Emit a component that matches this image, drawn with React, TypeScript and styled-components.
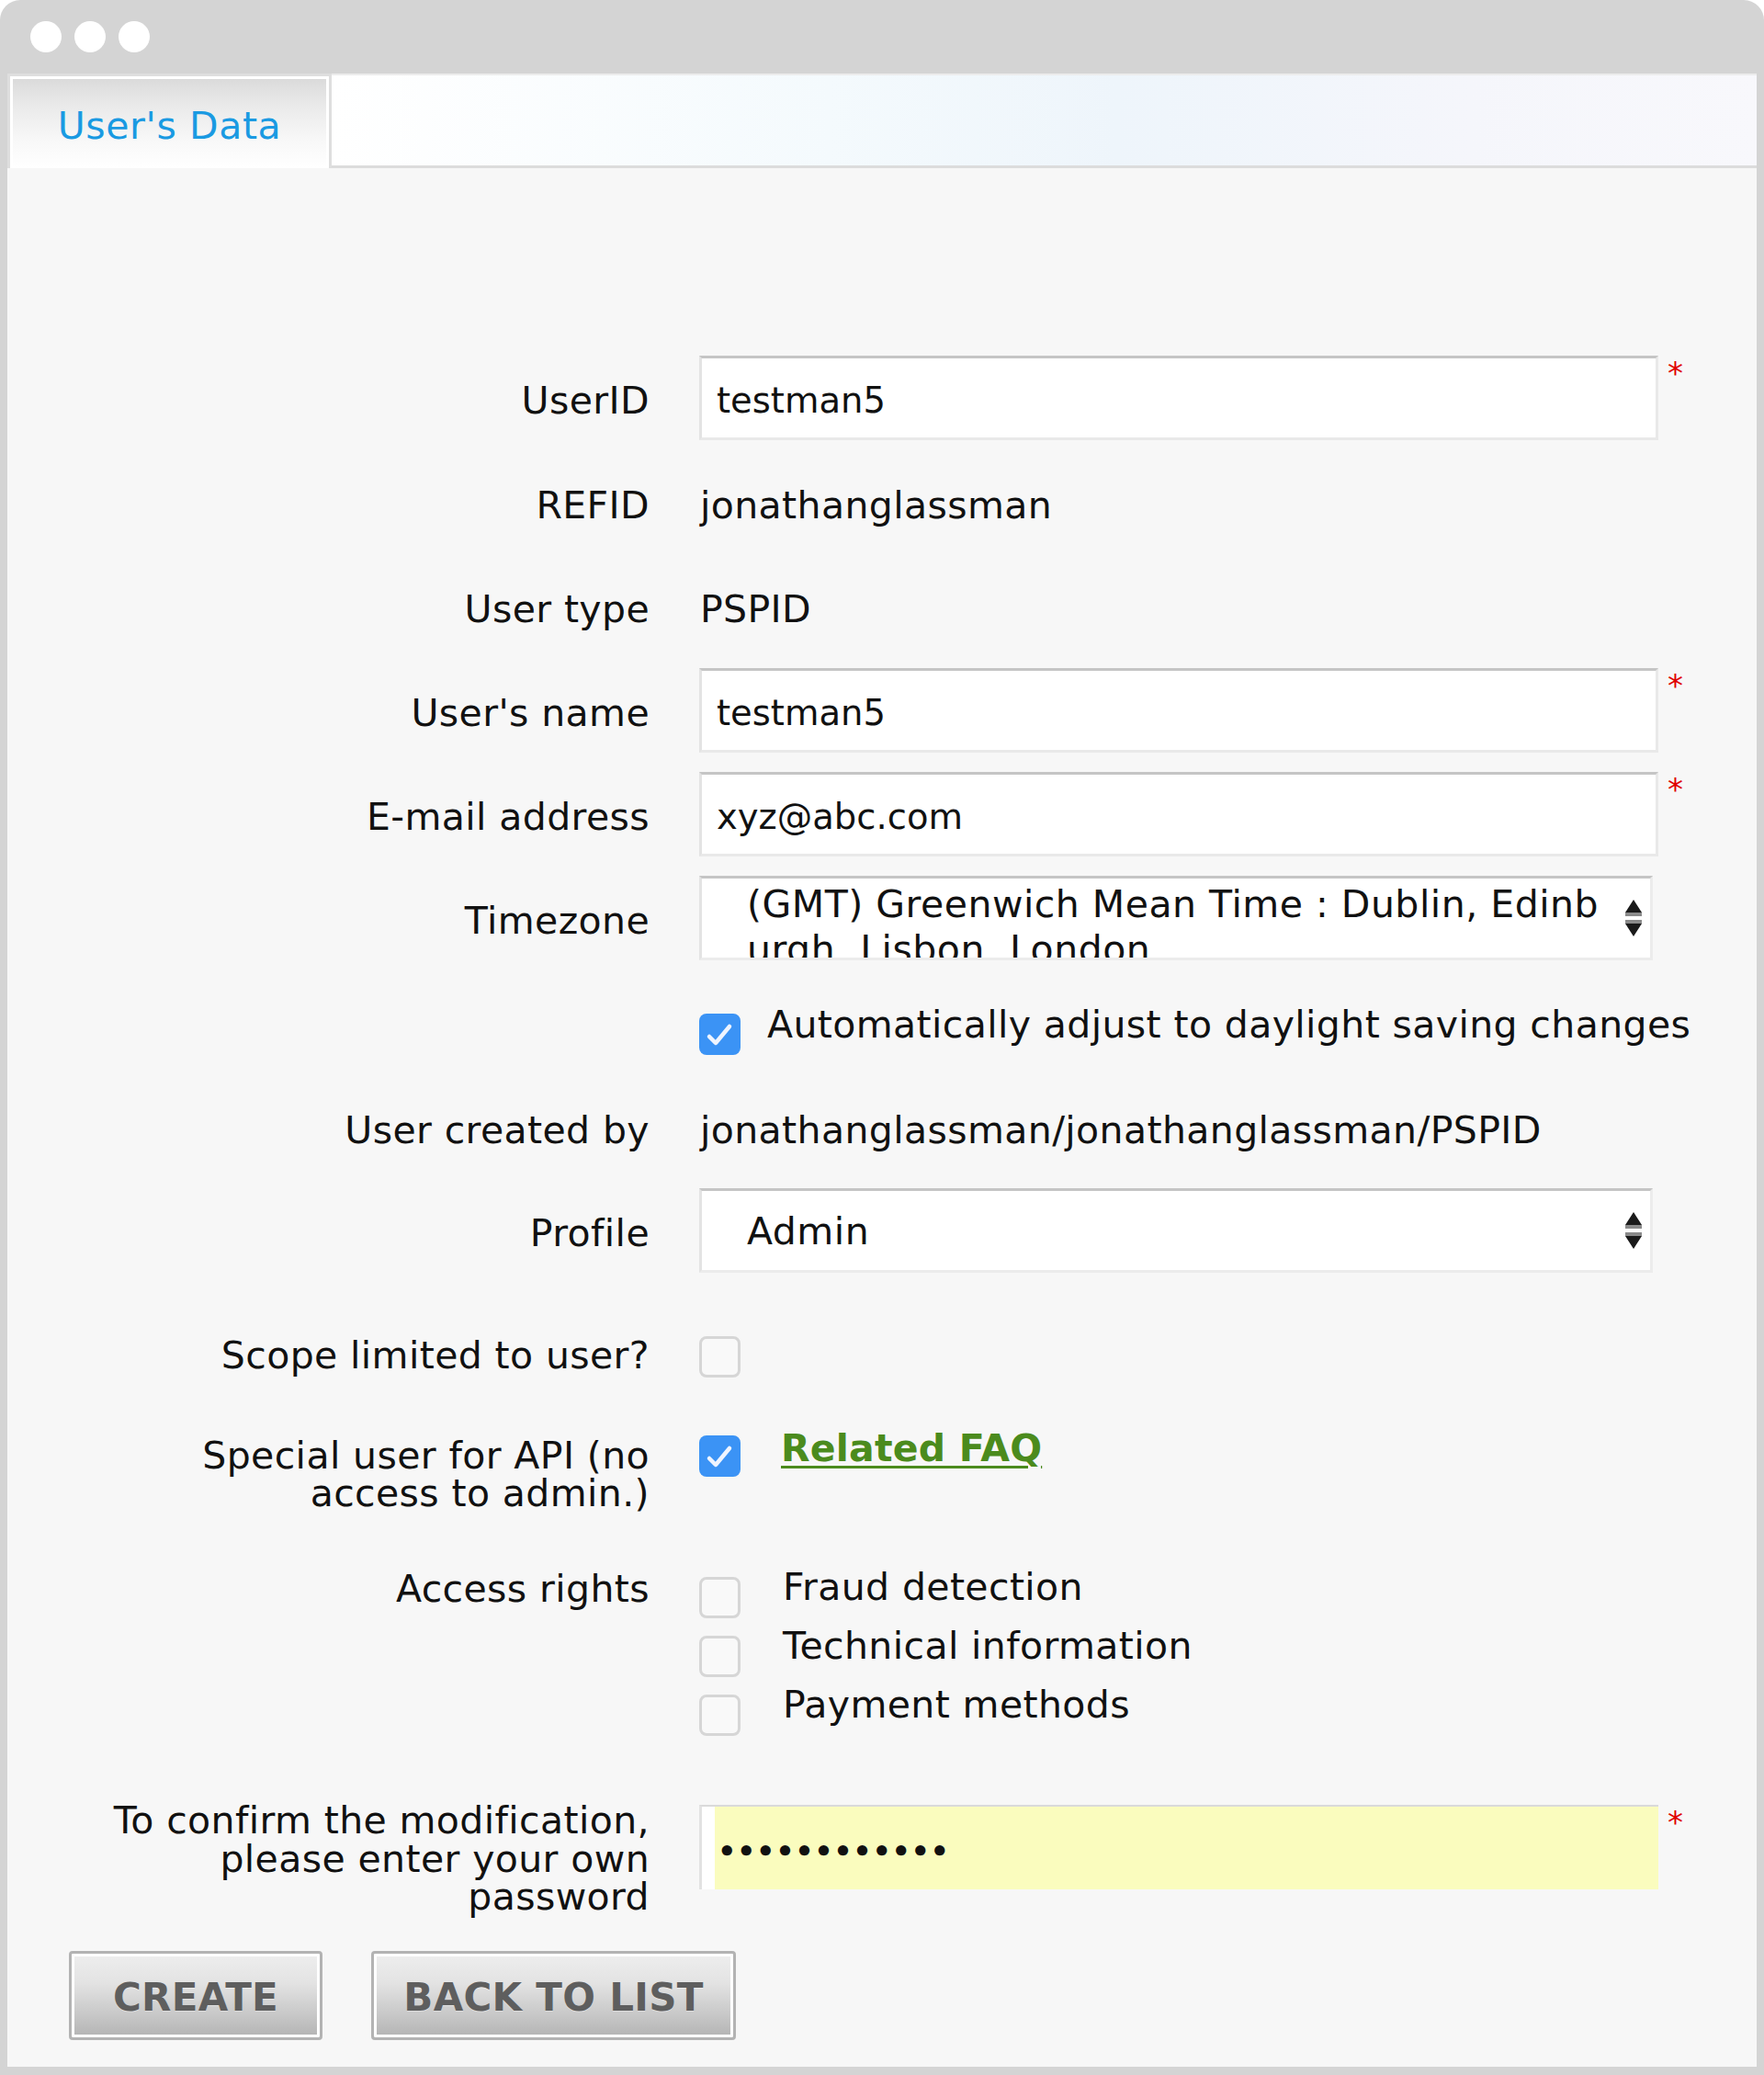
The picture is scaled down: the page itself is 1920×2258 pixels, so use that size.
import React from "react";
import styled, { createGlobalStyle } from "styled-components";

const GlobalStyle = createGlobalStyle`
  html, body { margin: 0; padding: 0; background: #ffffff; }
  body { font-family: "DejaVu Sans", Verdana, sans-serif; color: #111; letter-spacing: 0.38px; }
  *, *::before, *::after { box-sizing: border-box; }
`;

const Window = styled.div`
  width: 1920px;
  height: 2258px;
  background: #d4d4d4;
  border-radius: 22px 22px 0 0;
  display: flex;
  flex-direction: column;
  padding: 0 8px 9px;
`;

const TitleBar = styled.div`
  height: 80px;
  flex: none;
  display: flex;
  align-items: center;
  gap: 14px;
  padding-left: 25px;
`;

const Dot = styled.span`
  width: 34px;
  height: 34px;
  border-radius: 50%;
  background: #ffffff;
`;

const Panel = styled.div`
  flex: 1;
  background: #f7f7f7;
  display: flex;
  flex-direction: column;
`;

const TabStrip = styled.div`
  height: 103px;
  flex: none;
  display: flex;
`;

const Tab = styled.div`
  width: 353px;
  height: 103px;
  border: 3px solid #dedede;
  border-bottom: none;
  box-shadow: inset 0 3px 0 #ffffff, inset 3px 0 0 #ffffff, inset -3px 0 0 #ffffff;
  background: linear-gradient(#d9d9d9 0%, #e9e9e9 30%, #f8f8f8 70%, #ffffff 100%);
  display: flex;
  align-items: center;
  justify-content: center;
  padding-top: 7px;
  color: #1a9ae2;
  font-size: 41px;
  letter-spacing: 0.6px;
`;

const TabFill = styled.div`
  flex: 1;
  border-top: 2px solid #ececec;
  border-bottom: 3px solid #dcdcdc;
  background: linear-gradient(90deg, #ffffff 0%, #f4fafd 35%, #eef5fb 55%, #f5f6fb 80%, #f8f8fc 100%);
`;

const Form = styled.div`
  padding-top: 204px;
  display: flex;
  flex-direction: column;
`;

const Label = styled.div<{ $mt?: number; $lh?: number }>`
  padding-left: 60px;
  padding-right: 54px;
  padding-top: 3px;
  text-align: right;
  font-size: 41px;
  line-height: ${(p) => p.$lh ?? 41}px;
  color: #111;
  margin-top: ${(p) => p.$mt ?? 0}px;
`;

const Value = styled.span`
  font-size: 41px;
  line-height: 41px;
  padding-left: 1px;
  padding-top: 6px;
  white-space: nowrap;
  color: #111;
`;

const FormRow = styled.div<{ $mt: number; $h?: number; $align?: string }>`
  display: grid;
  grid-template-columns: 753px 1044px 1fr;
  align-items: ${(p) => p.$align ?? "center"};
  margin-top: ${(p) => p.$mt}px;
  min-height: ${(p) => p.$h ?? 0}px;

  & > ${Label} {
    padding-top: ${(p) => (p.$align ? 3 : 6)}px;
  }
`;

const Field = styled.div<{ $mt?: number }>`
  display: flex;
  align-items: flex-start;
  margin-top: ${(p) => p.$mt ?? 0}px;
  min-width: 0;
`;

const Required = styled.span<{ $mt: number }>`
  align-self: start;
  margin-top: ${(p) => p.$mt}px;
  padding-left: 10px;
  color: #e00000;
  font-size: 34px;
  line-height: 34px;
`;

const TextInput = styled.input`
  width: 1044px;
  height: 92px;
  border-style: solid;
  border-width: 3px;
  border-color: #c5c5c5 #e9e9e9 #e9e9e9 #e3e3e3;
  background: #ffffff;
  padding: 5px 16px 0;
  font-family: "DejaVu Sans", Verdana, sans-serif;
  font-size: 38.5px;
  letter-spacing: 0;
  color: #111;
  outline: none;
`;

const PasswordBox = styled.div`
  width: 1044px;
  height: 92px;
  border-left: 3px solid #e2e2e2;
  border-top: 2px solid #dadada;
  background: linear-gradient(90deg, #ffffff 14px, #fafcbe 14px);
  display: flex;
  align-items: center;
  padding-left: 17px;
  padding-top: 8px;
`;

const Bullets = styled.span`
  font-size: 32px;
  font-weight: bold;
  letter-spacing: 0.6px;
  color: #111;
`;

const SelectBox = styled.div`
  width: 1038px;
  height: 92px;
  overflow: hidden;
  border-style: solid;
  border-width: 3px;
  border-color: #c5c5c5 #ececec #ececec #e3e3e3;
  background: #ffffff;
  display: flex;
  align-items: center;
  padding: 0 9px 0 49px;
`;

const SelectText = styled.div<{ $multi?: boolean }>`
  flex: 1;
  align-self: ${(p) => (p.$multi ? "flex-start" : "center")};
  padding-top: ${(p) => (p.$multi ? 4 : 2)}px;
  font-size: 41px;
  line-height: 49px;
  letter-spacing: 0.5px;
  white-space: nowrap;
  color: #111;
`;

const BoxWrap = styled.span<{ $mt?: number }>`
  flex: none;
  display: block;
  width: 45px;
  height: 45px;
  margin-top: ${(p) => p.$mt ?? 0}px;
`;

const EmptyBox = styled.span<{ $mt?: number }>`
  flex: none;
  display: block;
  width: 45px;
  height: 45px;
  margin-top: ${(p) => p.$mt ?? 0}px;
  border: 3px solid #d6d6d6;
  border-radius: 8px;
  background: #f9f9f9;
`;

const CheckText = styled.span<{ $ml: number }>`
  margin-left: ${(p) => p.$ml}px;
  padding-top: 2px;
  font-size: 41px;
  line-height: 41px;
  white-space: nowrap;
  color: #111;
`;

const FaqLink = styled.a`
  margin-left: 44px;
  margin-top: -6px;
  font-size: 41px;
  line-height: 41px;
  font-weight: bold;
  letter-spacing: 0.2px;
  color: #4b8b1d;
  text-decoration: underline;
  text-decoration-thickness: 3px;
  text-underline-offset: 5px;
  white-space: nowrap;
`;

const OptionList = styled.div`
  display: flex;
  flex-direction: column;
  gap: 8px;
`;

const OptionRow = styled.div`
  display: flex;
  align-items: flex-start;
  height: 56px;
`;

const ButtonRow = styled.div`
  display: flex;
  gap: 53px;
  padding-left: 67px;
  margin-top: 37px;
`;

const Button = styled.button<{ $w: number }>`
  width: ${(p) => p.$w}px;
  height: 97px;
  border: 3px solid #b3b3b3;
  border-radius: 4px;
  box-shadow: inset 0 0 0 3px #ffffff;
  background: linear-gradient(#eeeeee 0%, #e3e3e3 35%, #cacaca 70%, #b3b3b3 100%);
  font-family: "DejaVu Sans", Verdana, sans-serif;
  font-weight: bold;
  font-size: 42px;
  letter-spacing: 0.3px;
  color: #5e5e5e;
  text-shadow: 0 1px 0 rgba(255, 255, 255, 0.4);
  padding: 4px 0 0;
`;

const Checked = ({ mt }: { mt?: number }) => (
  <BoxWrap $mt={mt}>
    <svg width="45" height="45" viewBox="0 0 45 45">
      <rect x="0" y="0" width="45" height="45" rx="8" fill="#3b93f5" />
      <path d="M11 25 L18 32 L33 14" fill="none" stroke="#eef4ff" strokeWidth="4.5" strokeLinecap="round" strokeLinejoin="round" />
    </svg>
  </BoxWrap>
);

const SelectArrows = () => (
  <svg width="18" height="40" viewBox="0 0 18 40" style={{ flex: "none" }}>
    <polygon points="9,0 18,14 0,14" fill="#1a1a1a" />
    <rect x="0" y="14" width="18" height="4" fill="#8a8a8a" />
    <rect x="0" y="22" width="18" height="4" fill="#8a8a8a" />
    <polygon points="0,26 18,26 9,40" fill="#1a1a1a" />
  </svg>
);

export default function App() {
  return (
    <>
      <GlobalStyle />
      <Window>
        <TitleBar>
          <Dot />
          <Dot />
          <Dot />
        </TitleBar>
        <Panel>
          <TabStrip>
            <Tab>User's Data</Tab>
            <TabFill />
          </TabStrip>
          <Form>
            <FormRow $mt={0} $h={92}>
              <Label>UserID</Label>
              <Field>
                <TextInput defaultValue="testman5" />
              </Field>
              <Required $mt={2}>*</Required>
            </FormRow>
            <FormRow $mt={22} $h={92}>
              <Label>REFID</Label>
              <Field>
                <Value>jonathanglassman</Value>
              </Field>
            </FormRow>
            <FormRow $mt={21} $h={92}>
              <Label>User type</Label>
              <Field>
                <Value>PSPID</Value>
              </Field>
            </FormRow>
            <FormRow $mt={21} $h={92}>
              <Label>User's name</Label>
              <Field>
                <TextInput defaultValue="testman5" />
              </Field>
              <Required $mt={2}>*</Required>
            </FormRow>
            <FormRow $mt={21} $h={92}>
              <Label>E-mail address</Label>
              <Field>
                <TextInput defaultValue="xyz@abc.com" />
              </Field>
              <Required $mt={2}>*</Required>
            </FormRow>
            <FormRow $mt={21} $h={92}>
              <Label>Timezone</Label>
              <Field>
                <SelectBox>
                  <SelectText $multi>
                    (GMT) Greenwich Mean Time : Dublin, Edinb
                    <br />
                    urgh, Lisbon, London
                  </SelectText>
                  <SelectArrows />
                </SelectBox>
              </Field>
            </FormRow>
            <FormRow $mt={48} $align="start">
              <Label />
              <Field>
                <Checked mt={10} />
                <CheckText $ml={29}>Automatically adjust to daylight saving changes</CheckText>
              </Field>
            </FormRow>
            <FormRow $mt={33} $h={92}>
              <Label>User created by</Label>
              <Field>
                <Value>jonathanglassman/jonathanglassman/PSPID</Value>
              </Field>
            </FormRow>
            <FormRow $mt={20} $h={92}>
              <Label>Profile</Label>
              <Field>
                <SelectBox>
                  <SelectText>Admin</SelectText>
                  <SelectArrows />
                </SelectBox>
              </Field>
            </FormRow>
            <FormRow $mt={69} $align="start">
              <Label $mt={-2}>Scope limited to user?</Label>
              <Field>
                <EmptyBox />
              </Field>
            </FormRow>
            <FormRow $mt={62} $align="start">
              <Label>
                Special user for API (no
                <br />
                access to admin.)
              </Label>
              <Field $mt={1}>
                <Checked />
                <FaqLink href="#">Related FAQ</FaqLink>
              </Field>
            </FormRow>
            <FormRow $mt={59} $align="start">
              <Label $mt={1}>Access rights</Label>
              <OptionList>
                <OptionRow>
                  <EmptyBox $mt={11} />
                  <CheckText $ml={46}>Fraud detection</CheckText>
                </OptionRow>
                <OptionRow>
                  <EmptyBox $mt={11} />
                  <CheckText $ml={46}>Technical information</CheckText>
                </OptionRow>
                <OptionRow>
                  <EmptyBox $mt={11} />
                  <CheckText $ml={46}>Payment methods</CheckText>
                </OptionRow>
              </OptionList>
            </FormRow>
            <FormRow $mt={69} $align="start">
              <Label $lh={41.5}>
                To confirm the modification,
                <br />
                please enter your own
                <br />
                password
              </Label>
              <Field $mt={6}>
                <PasswordBox>
                  <Bullets>••••••••••••</Bullets>
                </PasswordBox>
              </Field>
              <Required $mt={8}>*</Required>
            </FormRow>
          </Form>
          <ButtonRow>
            <Button $w={276}>CREATE</Button>
            <Button $w={397}>BACK TO LIST</Button>
          </ButtonRow>
        </Panel>
      </Window>
    </>
  );
}
